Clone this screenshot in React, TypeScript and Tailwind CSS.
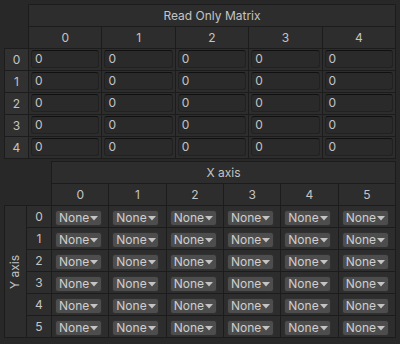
import React from "react";

const B = "border-[#1c1c1c]";
const font = { fontFamily: "Inter, 'Noto Sans', sans-serif" };

function Caret() {
  return (
    <svg width="8" height="5" viewBox="0 0 8 5" className="ml-[1px]">
      <path d="M0 0 H8 L4 4.5 Z" fill="#c4c4c4" />
    </svg>
  );
}

export default function App() {
  const cols5 = [0, 1, 2, 3, 4];
  const cols6 = [0, 1, 2, 3, 4, 5];
  return (
    <div
      className="w-[400px] h-[344px] bg-[#282828] text-[#c4c4c4] text-[12px] leading-none pt-[4px] px-[4px] overflow-hidden"
      style={font}
    >
      {/* Read only matrix */}
      <div className="grid grid-cols-[25px_repeat(5,1fr)] grid-rows-[23px_repeat(6,22px)] w-[392px]">
        <div className={`row-span-2 border-r border-b ${B}`} />
        <div className={`col-span-5 border-t border-r border-b ${B} bg-[#2d2d2d] flex items-center justify-center`}>
          Read Only Matrix
        </div>
        {cols5.map((c) => (
          <div key={c} className={`border-r border-b ${B} bg-[#2d2d2d] flex items-center justify-center`}>
            {c}
          </div>
        ))}
        {cols5.map((r) => (
          <React.Fragment key={r}>
            <div className={`border-l border-r border-b ${B} bg-[#313131] flex items-center justify-center`}>
              {r}
            </div>
            {cols5.map((c) => (
              <div key={c} className={`border-r border-b ${B} bg-[#2d2d2d] px-[2px] py-[1px]`}>
                <div className="h-[18px] rounded-[3px] bg-[#2a2a2a] border border-[#212121] border-t-[#101010] flex items-center pl-[3px]">
                  0
                </div>
              </div>
            ))}
          </React.Fragment>
        ))}
      </div>

      {/* Axis matrix */}
      <div className="mt-[2px] grid grid-cols-[23px_25px_repeat(6,1fr)] grid-rows-[23px_repeat(7,22px)] w-[392px]">
        <div className={`col-span-2 row-span-2 border-r border-b ${B}`} />
        <div className={`col-span-6 border-t border-r border-b ${B} bg-[#2d2d2d] flex items-center justify-center`}>
          X axis
        </div>
        {cols6.map((c) => (
          <div key={c} className={`border-r border-b ${B} bg-[#2d2d2d] flex items-center justify-center`}>
            {c}
          </div>
        ))}
        <div className={`row-span-6 col-start-1 row-start-3 border-l border-r border-b ${B} bg-[#2d2d2d] flex items-center justify-center`}>
          <div className="-rotate-90 whitespace-nowrap">Y axis</div>
        </div>
        {cols6.map((r) => (
          <React.Fragment key={r}>
            <div className={`col-start-2 border-r border-b ${B} bg-[#2d2d2d] flex items-center justify-center`}>
              {r}
            </div>
            {cols6.map((c) => (
              <div key={c} className={`border-r border-b ${B} bg-[#2d2d2d] pl-[3px] pt-[4px]`}>
                <div className="w-[47px] h-[16px] rounded-[3px] bg-[#4d4d4d] border border-[#303030] flex items-center pl-[3px] text-[#cfcfcf]">
                  <span>None</span>
                  <Caret />
                </div>
              </div>
            ))}
          </React.Fragment>
        ))}
      </div>
    </div>
  );
}
